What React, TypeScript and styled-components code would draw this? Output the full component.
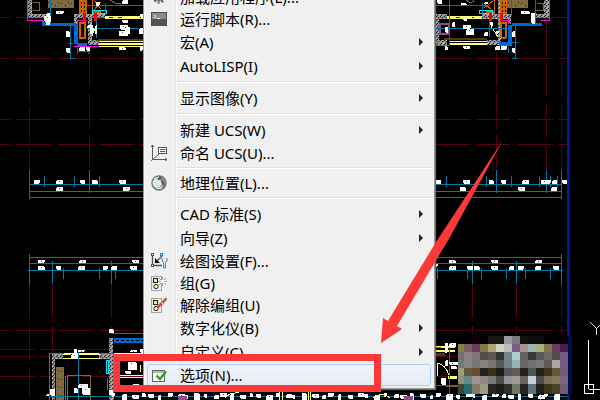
import React from 'react';
import styled, { createGlobalStyle } from 'styled-components';

const GlobalStyle = createGlobalStyle`
  html, body, #root { height: 100%; }
  body { margin: 0; background: #000; overflow: hidden; }
`;

const Viewport = styled.main`
  position: relative;
  height: 100%;
  overflow: hidden;
  background: #000;
  font-family: "Noto Sans", "Noto Sans CJK SC", sans-serif;
`;

const Canvas = styled.svg`
  position: absolute;
  top: 0;
  left: 0;
  pointer-events: none;
`;

const Menu = styled.ul`
  position: absolute;
  top: -16px;
  left: 143px;
  box-sizing: border-box;
  width: 292px;
  margin: 0;
  padding: 1px 3px 2px;
  list-style: none;
  border: 1px solid #979797;
  background: linear-gradient(to right, #f5f5f5 1px, #f0f0f0 1px 31px, #e2e3e3 31px 32px, #fff 32px 33px, #f0f0f0 33px);
  box-shadow: 1px 1px 1px #666;
`;

const Item = styled.button<{ $plain?: boolean; $active?: boolean }>`
  display: flex;
  align-items: center;
  box-sizing: border-box;
  width: 100%;
  height: ${(p) => (p.$plain ? 24 : 22)}px;
  padding: 0 7px 0 2px;
  border: 1px solid ${(p) => (p.$active ? '#aecff7' : 'transparent')};
  border-radius: 3px;
  background: ${(p) => (p.$active ? 'linear-gradient(#f0f3f8, #e5ecf7)' : 'transparent')};
  color: #000;
  font: 15px/20px "Noto Sans", "Noto Sans CJK SC", sans-serif;
  text-align: left;
  white-space: nowrap;
`;

const IconSlot = styled.span`
  display: flex;
  flex: none;
  width: 18px;
  margin-right: 12px;
`;

const Label = styled.span`
  flex: 1;
`;

const Separator = styled.li`
  height: 1px;
  margin: 3px 0 3px 29px;
  border-bottom: 1px solid #fff;
  background: #e0e0e0;
`;

const ItemIcon = styled.svg`
  display: block;
  width: 18px;
  height: 18px;
`;

const Submenu = () => (
  <svg width="4" height="8" viewBox="0 0 4 8" aria-hidden="true">
    <path d="M0 0L4 4L0 8Z" fill="#222" />
  </svg>
);

type IconName = 'gear' | 'console' | 'ucs' | 'globe' | 'draft' | 'group' | 'ungroup' | 'options';

const DottedGroup = () => (
  <>
    <rect x="1.5" y="2.5" width="10" height="14" fill="none" stroke="#555" strokeDasharray="1 1" />
    <rect x="3.5" y="4.5" width="4" height="4" fill="#f5e79a" stroke="#222" />
    <circle cx="6" cy="12.5" r="2.2" fill="#e9f3b0" stroke="#222" />
  </>
);

const drawings: Record<IconName, React.ReactNode> = {
  gear: (
    <>
      <circle cx="9" cy="9" r="5" fill="none" stroke="#666" strokeWidth="3" strokeDasharray="2 1.5" />
      <circle cx="9" cy="9" r="3.5" fill="#eee" stroke="#555" />
    </>
  ),
  console: (
    <>
      <rect x="1.5" y="2.5" width="15" height="13" fill="#666" stroke="#4a4d50" />
      <rect x="2" y="3" width="14" height="6" fill="#8b8b8b" />
      <rect x="2" y="9" width="14" height="6" fill="#505254" />
      <path d="M4 5L6 6.5L4 8M7 8.5H10" fill="none" stroke="#fff" />
    </>
  ),
  ucs: (
    <>
      <path d="M2.5 1V15.5H17M1 3L2.5 1L4 3M15 14L17 15.5L15 17M1 17L9 10" fill="none" stroke="#555c63" />
      <rect x="8.5" y="3.5" width="8" height="6" fill="#fff" stroke="#4b535c" />
      <path d="M10 5.5H15M10 7.5H15" stroke="#4b535c" />
    </>
  ),
  globe: (
    <>
      <circle cx="9" cy="9" r="7" fill="#a5aaa8" stroke="#6c7070" strokeWidth="1.4" />
      <circle cx="7" cy="9" r="4.5" fill="#dce9e2" />
      <path d="M7 2L12 3L11 6L8 6ZM12 5Q16 8 14 13L11 8Z" fill="#555e5c" />
      <path d="M4 5Q6 3 9 3M4 12Q7 16 12 14" fill="none" stroke="#f7faf8" />
    </>
  ),
  draft: (
    <>
      <path d="M2.5 4V13.5H12M13 3L5 11" fill="none" stroke="#4c5661" strokeWidth="1.3" />
      <path d="M5 6V11H10Z" fill="#111" />
      <rect x="1.5" y="1.5" width="2" height="2" fill="#fff" stroke="#4c5661" />
      <rect x="10.5" y="1.5" width="2" height="2" fill="#fff" stroke="#3084c6" />
      <rect x="1.5" y="12.5" width="2" height="2" fill="#fff" stroke="#4c5661" />
      <path d="M12 6V9L13.5 10.5V16H15.5V10.5L17 9V6" fill="#dce9f8" stroke="#587ca4" />
    </>
  ),
  group: (
    <>
      <DottedGroup />
      <path d="M8 7.5H17M12.5 3V12M9 4L16 11M16 4L9 11" stroke="#73a9bb" />
      <circle cx="12.5" cy="7.5" r="1.8" fill="#fff" />
    </>
  ),
  ungroup: (
    <>
      <DottedGroup />
      <path d="M8 11L13 6" stroke="#c5513f" strokeWidth="3" />
      <path d="M11.5 7.5L16.5 2.5" stroke="#8c713b" strokeWidth="2.5" />
      <path d="M11 6L13.5 8.5" stroke="#eee" />
    </>
  ),
  options: (
    <>
      <rect x="2.5" y="4.5" width="12" height="11" fill="#f5f6f7" stroke="#60666b" />
      <path d="M3 6H14" stroke="#b2b8bc" strokeWidth="2" />
      <path d="M6.5 9.5L10 13L16 5.5" fill="none" stroke="#38a022" strokeWidth="2.4" />
    </>
  ),
};

type Entry = { text: string; icon?: IconName; sub?: boolean; plain?: boolean; active?: boolean } | null;

const entries: Entry[] = [
  { text: '加载应用程序(L)...', icon: 'gear' },
  { text: '运行脚本(R)...', icon: 'console' },
  { text: '宏(A)', sub: true, plain: true },
  { text: 'AutoLISP(I)', sub: true, plain: true },
  null,
  { text: '显示图像(Y)', sub: true, plain: true },
  null,
  { text: '新建 UCS(W)', sub: true, plain: true },
  { text: '命名 UCS(U)...', icon: 'ucs' },
  null,
  { text: '地理位置(L)...', icon: 'globe' },
  null,
  { text: 'CAD 标准(S)', sub: true, plain: true },
  { text: '向导(Z)', sub: true, plain: true },
  { text: '绘图设置(F)...', icon: 'draft' },
  { text: '组(G)', icon: 'group' },
  { text: '解除编组(U)', icon: 'ungroup' },
  { text: '数字化仪(B)', sub: true, plain: true },
  { text: '自定义(C)', sub: true, plain: true },
  { text: '选项(N)...', icon: 'options', active: true },
];

type Box = [number, number, number, number];

const Blobs = ({ items }: { items: Box[] }) => (
  <g>
    {items.map(([x, y, w, h], i) => (
      <g key={i}>
        <rect x={x} y={y} width={w} height={h} fill="#fff" />
        <rect x={x + (i % 3 ? 0 : w - 1)} y={i % 2 ? y : y + h - 1} width="1" height="1" fill="#000" />
        {w > 6 && <rect x={x + 3} y={y + 1} width="1" height="1" fill="#555" />}
      </g>
    ))}
  </g>
);

const Fills = ({ items, fill }: { items: Box[]; fill: string }) => (
  <g fill={fill}>
    {items.map(([x, y, w, h], i) => (
      <rect key={i} x={x} y={y} width={w} height={h} />
    ))}
  </g>
);

const axisRows = [58, 119, 144, 330];
const upperTicks = [44, 74, 99, 446, 486, 511, 539, 550, 557];
const lowerTicks = [63, 99, 115, 437, 467, 481, 506, 525, 550];

const dimLabels: Box[] = [
  [34, 180, 6, 4], [56, 180, 7, 4], [80, 180, 5, 4], [92, 180, 6, 4], [119, 180, 7, 4], [56, 187, 7, 4], [123, 187, 7, 4],
  [435, 180, 6, 4], [463, 180, 7, 4], [489, 180, 5, 4], [501, 180, 5, 4], [522, 180, 7, 4], [541, 180, 10, 4], [552, 180, 5, 4],
  [562, 180, 5, 4], [460, 187, 6, 4], [518, 187, 7, 4], [551, 187, 6, 4],
  [38, 260, 7, 3], [79, 260, 7, 3], [132, 260, 7, 3], [38, 266, 7, 4], [56, 266, 5, 4], [78, 266, 7, 4], [103, 266, 5, 4],
  [111, 266, 6, 4], [130, 266, 7, 4], [449, 260, 7, 3], [491, 260, 7, 3], [535, 260, 7, 3], [435, 264, 3, 3], [449, 266, 7, 4],
  [467, 266, 6, 4], [474, 266, 6, 4], [491, 266, 7, 4], [509, 266, 5, 4], [518, 266, 6, 4], [535, 266, 6, 4], [553, 266, 6, 4],
];

const planLabels: Box[] = [
  [56, 11, 8, 3], [46, 13, 4, 12], [44, 16, 7, 6], [66, 31, 4, 6], [66, 48, 4, 5], [87, 25, 6, 3], [90, 28, 4, 6], [95, 25, 2, 9],
  [120, 25, 8, 5], [119, 31, 9, 5], [122, 20, 6, 3], [122, 0, 6, 4], [96, 2, 4, 4], [79, 47, 6, 4], [86, 47, 4, 4], [119, 47, 7, 3],
  [140, 14, 3, 4], [139, 28, 4, 6], [140, 46, 3, 5], [125, 27, 5, 7],
  [437, 0, 5, 4], [461, 3, 6, 2], [463, 18, 4, 3], [452, 22, 3, 5], [463, 25, 8, 4], [466, 29, 8, 6], [445, 27, 3, 6], [445, 46, 3, 4],
  [463, 46, 7, 3], [495, 46, 5, 4], [501, 46, 6, 4], [512, 31, 3, 6], [512, 48, 3, 5], [521, 11, 9, 3], [531, 13, 4, 11], [484, 2, 4, 2],
  [496, 31, 3, 3], [484, 32, 4, 4], [490, 22, 3, 4],
  [109, 329, 5, 4], [74, 349, 3, 10], [71, 354, 7, 5], [78, 350, 7, 2], [78, 384, 10, 4], [82, 388, 8, 7], [74, 388, 4, 5],
  [50, 389, 5, 7], [46, 394, 3, 2], [109, 390, 4, 5], [130, 350, 7, 2], [140, 349, 3, 4], [128, 362, 9, 8], [125, 371, 6, 3], [132, 384, 7, 2],
  [445, 343, 3, 10], [449, 343, 7, 4], [449, 362, 9, 3], [451, 366, 6, 3], [441, 378, 5, 7], [445, 360, 3, 6],
];

const stripLabels: Box[] = Array.from({ length: 52 }, (_, i): Box => [
  112 + i * 9 + ((i * 5) % 4), 393 + (i % 3), 3 + ((i * 7) % 5), i % 4 === 1 ? 7 : 4,
]).filter(([x]) => x < 562);

const hatch: Box[] = [
  [28, 0, 4, 18], [28, 14, 19, 4], [74, 14, 31, 4], [74, 14, 3, 11], [88, 15, 4, 28], [88, 40, 11, 5],
  [544, 0, 5, 18], [482, 14, 29, 5], [535, 14, 12, 4], [436, 14, 11, 5], [436, 14, 3, 31], [436, 40, 11, 5], [487, 40, 12, 5], [498, 0, 3, 42], [508, 14, 3, 10],
  [52, 354, 3, 46], [52, 354, 11, 5], [99, 354, 11, 5], [109, 338, 4, 62],
];

const mosaicRows = [
  ['', '', '#110005', '', '#171717', '#171717', '#999799', '#7c7c7c', '#111111', '#0d0d0d', '#0d0d0d', '', '', '#08000c', '#000c48'],
  ['#858344', '#7e5b64', '#6a3d5b', '#87764a', '#aaa56a', '#d2d4bd', '#babcb6', '#7d5a87', '#a3948f', '#9eb6ad', '#a4b27d', '#82744b', '#693d5f', '#4b1c53', '#000c48'],
  ['#75706d', '#8b827e', '#807579', '#514e4b', '#5b5856', '#353332', '#74858b', '#adced0', '#675f5b', '#353838', '#59595a', '#6d6765', '#514b4d', '#745982', '#000c48'],
  ['#777776', '#858484', '#777675', '#858280', '#777574', '#565757', '#708287', '#92b5b9', '#6a6468', '#737273', '#7b7978', '#5e5a58', '#aaa79d', '#745982', '#000c48'],
  ['#9b9d75', '#635941', '#6b4b2d', '#24231b', '#393219', '#1c1b14', '#54575a', '#635c59', '#272016', '#4e5356', '#24231a', '#3d3720', '#655935', '#735979', '#000c48'],
  ['#909076', '#638a86', '#a1938c', '#918783', '#7a7776', '#4d4c4a', '#929593', '#a19a98', '#696360', '#c7ced6', '#4b4d4b', '#7c7060', '#85775a', '#7e637d', '#000c48'],
  ['#3f4439', '#246b72', '#837966', '#a09c82', '#282820', '#1c1b16', '#29322b', '#74746a', '#27231e', '#5b747b', '#211f17', '#3c371c', '#4a4425', '#735a72', '#000c48'],
];

const mosaicHeight = (row: number) => (row === 6 ? 10 : 8);

const Drawing = () => (
  <Canvas width="600" height="400" viewBox="0 0 600 400" shapeRendering="crispEdges" aria-hidden="true">
    <defs>
      <pattern id="concrete" width="4" height="4" patternUnits="userSpaceOnUse">
        <rect width="4" height="4" fill="#888" />
        <path d="M0 .5H1M2 1.5H3M1 3.5H2" stroke="#222" />
        <path d="M2 .5H3M0 2.5H1M3 3.5H4" stroke="#bbb" />
      </pattern>
      <pattern id="fabric" width="10" height="8" patternUnits="userSpaceOnUse">
        <rect width="10" height="8" fill="#80693c" />
        <path d="M1 3.5H2M5 5.5H6M8 2.5H9" stroke="#1c170c" />
      </pattern>
    </defs>

    <g stroke="#560015" strokeDasharray="34 2 1 4" fill="none">
      {axisRows.map((y) => (
        <path key={y} d={`M-24 ${y}.5H143M435 ${y}.5H567`} />
      ))}
      <path d="M-24 17.5H28M550 17.5H567M0 349.5H109M0 356.5H52M0 376.5H110M435 356.5H458M435 376.5H458" />
      <path d="M29.5 25V170M89.5 52V170M496.5 52V170M546.5 22V170M561.5 22V170" />
      <path d="M29.5 285V397M52.5 284V352M111.5 284V330M472.5 284V334M516.5 284V334M561.5 284V334" />
    </g>

    <Fills fill="url(#fabric)" items={[[48, 0, 26, 8], [503, 0, 25, 8], [56, 367, 8, 33]]} />
    <g stroke="#80693c" fill="none">
      <path d="M33 2.5H39.5V10.5H33M110 0L117 4L121 3M466 0Q472 5 474 0M536.5 3.5H543V10.5H535.5V0M65.5 376V400M67.5 376V400M67 375.5H90.5V400M107.5 378V390M124 386V390M446 386H458V400" />
    </g>
    <Fills fill="url(#concrete)" items={hatch} />
    <Fills fill="#0067d2" items={[[42, 21, 8, 5], [50, 23, 26, 3], [74, 25, 4, 19], [77, 43, 10, 4], [512, 23, 30, 3], [508, 25, 4, 19], [499, 42, 13, 4], [114, 338, 29, 5]]} />
    <path d="M116 340.5H143" stroke="#000" strokeDasharray="3 2" />
    <Fills fill="#cf6200" items={[[79, 0, 8, 14], [92, 11, 9, 3], [500, 0, 7, 14], [486, 11, 9, 3]]} />
    <g stroke="#cf6200" fill="none">
      <path d="M80.5 23.5H84.5V37.5H80.5ZM79.5 22.5H85.5V38.5H79.5ZM92.5 0V13M94 0L101 9M101 2L93 11M501.5 23.5H505.5V38.5H501.5ZM500.5 22.5H506.5V37.5H500.5ZM484 8L494 0M484 3L493 11M494.5 0V13" />
      <path d="M81.5 2V12M84.5 2V12M502.5 2V12M505.5 2V12" stroke="#1c0e00" strokeDasharray="2 2" />
    </g>
    <Fills fill="#ffff79" items={[[105, 16, 38, 3], [99, 41, 44, 1], [99, 43, 44, 2], [99, 46, 44, 1], [447, 16, 35, 3], [449, 41, 38, 1], [449, 43, 38, 2], [63, 353, 37, 2], [63, 358, 37, 1], [120, 375, 23, 3], [114, 353, 29, 1], [435, 346, 20, 2], [435, 350, 20, 2], [448, 376, 9, 3]]} />
    <Fills fill="#503800" items={[[98, 39, 45, 2], [444, 38, 43, 2], [435, 353, 10, 3]]} />
    <path d="M109 17.5H125M456 17.5H460M472 17.5H474" stroke="#6d2800" strokeDasharray="4 5" />
    <path d="M120 376.5H143" stroke="#6d0015" />
    <path d="M92 36L96 25M489 23L498 37M437.5 363V376M437 363Q446 365 449 375M140 365V372" stroke="#ffff79" fill="none" />
    <g stroke="#ff00e8" fill="none">
      <path d="M27.5 0V20.5H43M77.5 33V20.5H87M74 46.5H99M541 20.5H549.5V0M499 20.5H508.5V24M435 45.5H449M500 45.5H512M49.5 400V353.5H64M99 353.5H110M435 347.5H441" />
    </g>
    <path d="M92.5 10.5H106.5V13.5H92.5ZM479.5 10.5H492.5V13.5H479.5ZM106.5 360.5H108.5V373.5H106.5Z" stroke="#00eeff" fill="none" />
    <Fills fill="#ff0000" items={[[83, 13, 3, 9], [94, 13, 3, 8], [489, 13, 3, 8], [500, 13, 3, 8]]} />
    <rect x="440" y="24" width="9" height="10" fill="none" stroke="#914b87" strokeWidth="2" />

    <g stroke="#00789f" fill="none">
      <path d="M29 184.5H143M29 191.5H143M29 197.5H143M435 184.5H562M435 191.5H562M435 197.5H562" />
      <path d="M29 257.5H143M29 263.5H143M28 270.5H143M435 257.5H562M435 263.5H562M435 270.5H563" />
      <path d="M29.5 170V199M89.5 170V193M496.5 170V193M546.5 170V193M561.5 170V199M29.5 254V285M52.5 261V284M111.5 261V284M472.5 261V284M516.5 261V284M561.5 254V285" />
      {upperTicks.map((x) => <path key={x} d={`M${x}.5 176V187`} />)}
      {lowerTicks.map((x) => <path key={x} d={`M${x}.5 268V279`} />)}
      <path d="M50.5 0V26M70.5 24V58M68 43.5H73M70 58.5H75M87 5.5H143M87 28.5H143M96.5 20V38M105.5 3V15M77 51.5H90M77.5 48V54M88.5 48V54M511.5 0V16M535.5 0V26M515.5 26V58M511 42.5H518M512 58.5H518M435 5.5H486M435 28.5H508M449.5 0V45M489.5 20V37M482.5 3V14M496 49.5H509M508.5 47V53" />
      <path d="M111 333.5H143M78.5 352V400M49 396.5H567M449.5 345V396M435 385.5H458M113.5 360V400M540.5 394V400M472.5 394V400" />
    </g>
    <Blobs items={dimLabels} />
    <Blobs items={planLabels} />
    <Blobs items={stripLabels} />
    <Fills fill="#914b87" items={[[178, 396, 9, 4], [404, 396, 9, 4]]} />
    <path d="M225 398Q230 392 239 393M279.5 392V400M282.5 392V400M308.5 392V400M310.5 392V400M373 398Q382 391 390 398" stroke="#ffff79" fill="none" />
    <rect x="567" width="3" height="400" fill="#001d87" />

    {mosaicRows.map((row, r) => row.map((fill, c) => fill && (
      <rect key={`${r}-${c}`} x={c === 0 ? 458 : 456 + c * 8} y={336 + r * 8} width={c === 0 ? 6 : c === 14 ? 4 : 8} height={mosaicHeight(r)} fill={fill} />
    )))}

    <path d="M588.5 340V389M589 389.5H600M584.5 384.5H593.5V393.5H584.5Z" stroke="#fff" fill="none" />
    <path d="M590 322L596.5 328.5L603 322M596.5 328V335" stroke="#ddd" fill="none" />
  </Canvas>
);

const Annotation = () => (
  <Canvas width="600" height="400" viewBox="0 0 600 400" aria-hidden="true">
    <path d="M503 140L450 237L397 326L402 329L381 343L383 318L388 321L436 242Z" fill="#fb3a37" />
    <rect x="116.5" y="357.5" width="261" height="31" fill="none" stroke="#fb3a37" strokeWidth="7" />
  </Canvas>
);

export default function App() {
  return (
    <Viewport>
      <GlobalStyle />
      <Drawing />
      <Menu>
        {entries.map((entry, i) =>
          entry ? (
            <li key={i}>
              <Item type="button" $plain={entry.plain} $active={entry.active}>
                <IconSlot>{entry.icon && <ItemIcon viewBox="0 0 18 18" aria-hidden="true">{drawings[entry.icon]}</ItemIcon>}</IconSlot>
                <Label>{entry.text}</Label>
                {entry.sub && <Submenu />}
              </Item>
            </li>
          ) : (
            <Separator key={i} role="separator" />
          ),
        )}
      </Menu>
      <Annotation />
    </Viewport>
  );
}
